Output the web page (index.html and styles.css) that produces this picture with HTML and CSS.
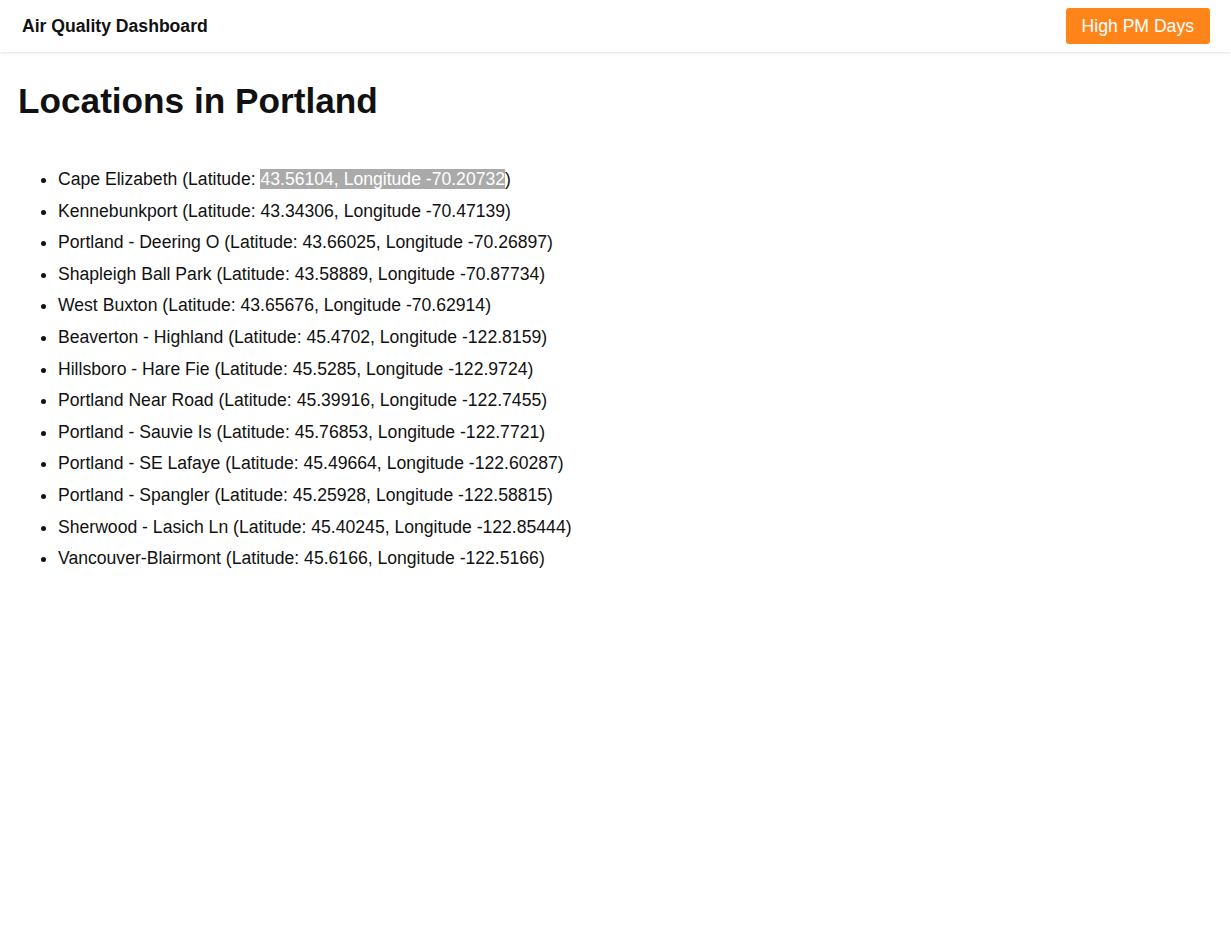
FILE: index.html
```html
<!DOCTYPE html>
<html lang="en">
<head>
<meta charset="utf-8">
<title>Air Quality Dashboard</title>
<link rel="stylesheet" href="styles.css">
</head>
<body>
<header class="navbar">
  <div class="brand">Air Quality Dashboard</div>
  <button class="btn-high">High PM Days</button>
</header>
<main class="content">
  <h1 class="page-title">Locations in Portland</h1>
  <ul class="locations">
    <li>Cape Elizabeth (Latitude: <span class="selected">43.56104, Longitude -70.20732</span>)</li>
    <li>Kennebunkport (Latitude: 43.34306, Longitude -70.47139)</li>
    <li>Portland - Deering O (Latitude: 43.66025, Longitude -70.26897)</li>
    <li>Shapleigh Ball Park (Latitude: 43.58889, Longitude -70.87734)</li>
    <li>West Buxton (Latitude: 43.65676, Longitude -70.62914)</li>
    <li>Beaverton - Highland (Latitude: 45.4702, Longitude -122.8159)</li>
    <li>Hillsboro - Hare Fie (Latitude: 45.5285, Longitude -122.9724)</li>
    <li>Portland Near Road (Latitude: 45.39916, Longitude -122.7455)</li>
    <li>Portland - Sauvie Is (Latitude: 45.76853, Longitude -122.7721)</li>
    <li>Portland - SE Lafaye (Latitude: 45.49664, Longitude -122.60287)</li>
    <li>Portland - Spangler (Latitude: 45.25928, Longitude -122.58815)</li>
    <li>Sherwood - Lasich Ln (Latitude: 45.40245, Longitude -122.85444)</li>
    <li>Vancouver-Blairmont (Latitude: 45.6166, Longitude -122.5166)</li>
  </ul>
</main>
</body>
</html>
```
FILE: styles.css
```css
html, body {
  margin: 0;
  padding: 0;
  background: #ffffff;
  color: #111111;
  font-family: "Liberation Sans", Arial, sans-serif;
}

.navbar {
  display: flex;
  align-items: center;
  justify-content: space-between;
  height: 52px;
  padding: 0 21px 0 22px;
  background: #ffffff;
  box-shadow: 0 1px 3px rgba(0, 0, 0, 0.12);
}

.brand {
  font-size: 17.6px;
  font-weight: bold;
  color: #111111;
  padding-top: 1px;
}

.btn-high {
  height: 36px;
  padding: 0 16px;
  border: none;
  border-radius: 3px;
  background: #ff851b;
  color: #ffffff;
  font-family: "Liberation Sans", Arial, sans-serif;
  font-size: 17.6px;
}

.content {
  padding: 0 18px;
}

.page-title {
  margin: 28px 0 42px;
  font-size: 35.2px;
  font-weight: bold;
  line-height: 42px;
  color: #111111;
}

.locations {
  margin: 0;
  padding-left: 40px;
  font-size: 17.6px;
  line-height: 31.6px;
  color: #111111;
}

.selected {
  background: #aaaaaa;
  color: #ffffff;
}
```
